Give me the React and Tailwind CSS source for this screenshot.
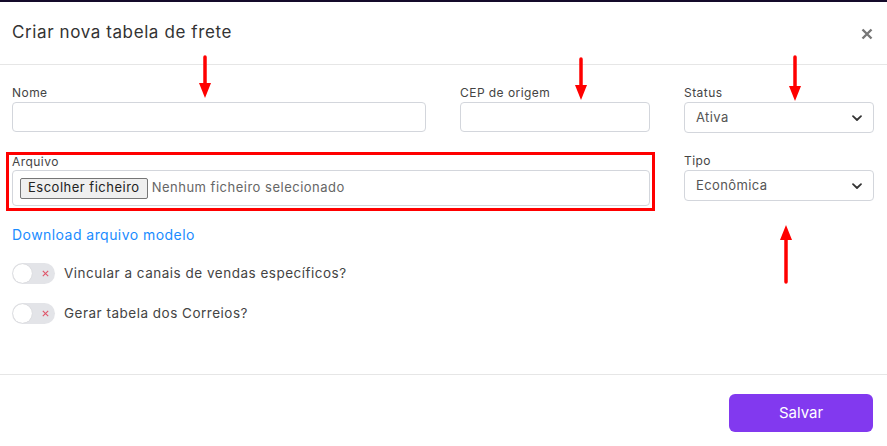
import React from 'react';

const font = { fontFamily: 'Inter, "Noto Sans", sans-serif' };

const Chevron = () => (
  <svg width="12" height="12" viewBox="0 0 12 12" className="absolute right-[10px] top-1/2 -translate-y-1/2">
    <path d="M2 4.2 L6 8 L10 4.2" fill="none" stroke="#333" strokeWidth="1.8" strokeLinecap="round" strokeLinejoin="round" />
  </svg>
);

const Select = ({ value }) => (
  <div className="relative h-[31px] rounded-[4px] border border-[#d3d6dc] bg-white flex items-center pl-[11px] text-[13px] text-[#555] tracking-[0.4px]">
    {value}
    <Chevron />
  </div>
);

const Label = ({ children }) => (
  <label className="block text-[12px] leading-[14px] text-[#444] mb-[2px] tracking-[0.45px]">{children}</label>
);

const Toggle = ({ label }) => (
  <div className="flex items-center gap-[9px]">
    <div className="relative w-[43px] h-[21px] rounded-full bg-[#e3e4e8]">
      <div className="absolute left-[1px] top-[1px] w-[19px] h-[19px] rounded-full bg-white shadow-[0_0_1px_rgba(0,0,0,0.2)]" />
      <svg width="7" height="7" viewBox="0 0 7 7" className="absolute left-[30px] top-[7px]">
        <path d="M0.8 0.8 L6.2 6.2 M6.2 0.8 L0.8 6.2" stroke="#e0556a" strokeWidth="1.1" />
      </svg>
    </div>
    <span className="text-[13.5px] text-[#444] tracking-[0.5px]">{label}</span>
  </div>
);

const Arrow = ({ x, y, h, up }) => (
  <svg
    width="16"
    height={h}
    viewBox={`0 0 16 ${h}`}
    className="absolute"
    style={{ left: x - 8, top: y }}
  >
    {up ? (
      <>
        <path d={`M8 12 L8 ${h - 2}`} stroke="#f00" strokeWidth="3.5" strokeLinecap="round" />
        <path d="M8 0 L14 15 L2 15 Z" fill="#f00" />
      </>
    ) : (
      <>
        <path d={`M8 2 L8 ${h - 12}`} stroke="#f00" strokeWidth="3.5" strokeLinecap="round" />
        <path d={`M2 ${h - 15} L14 ${h - 15} L8 ${h} Z`} fill="#f00" />
      </>
    )}
  </svg>
);

export default function App() {
  return (
    <div className="relative w-[887px] h-[446px] bg-white overflow-hidden" style={font}>
      <div className="h-[2px] bg-[#140a2a]" />

      <div className="h-[63px] border-b border-[#e6e6e6] flex items-center justify-between pl-[12px] pr-[14px]">
        <h3 className="text-[17px] text-[#333] tracking-[0.6px]">Criar nova tabela de frete</h3>
        <svg width="12" height="12" viewBox="0 0 12 12" className="mt-[2px]">
          <path d="M1.5 1.5 L10.5 10.5 M10.5 1.5 L1.5 10.5" stroke="#777" strokeWidth="2.4" />
        </svg>
      </div>

      <div className="px-[12px] pt-[21px] h-[310px] border-b border-[#e6e6e6]">
        <div className="grid grid-cols-[414px_190px_190px] gap-x-[34px]">
          <div>
            <Label>Nome</Label>
            <div className="h-[30px] rounded-[4px] border border-[#d3d6dc]" />
          </div>
          <div>
            <Label>CEP de origem</Label>
            <div className="h-[30px] rounded-[4px] border border-[#d3d6dc]" />
          </div>
          <div>
            <Label>Status</Label>
            <Select value="Ativa" />
          </div>

          <div className="col-span-2 mt-[19px] -ml-[6px] -mr-[5px] border-[3px] border-[#f00] pl-[3px] pr-[2px] pb-[2px]">
            <label className="block text-[12px] leading-[14px] text-[#444] mb-[1px] tracking-[0.45px]">Arquivo</label>
            <div className="h-[36px] rounded-[4px] border border-[#d3d6dc] flex items-center pl-[7px]">
              <span className="h-[21px] px-[7px] border border-[#767676] rounded-[2px] bg-[#efefef] text-[13px] text-[#222] flex items-center tracking-[0.5px]">
                Escolher ficheiro
              </span>
              <span className="ml-[4px] text-[13px] text-[#666] tracking-[0.5px]">Nenhum ficheiro selecionado</span>
            </div>
          </div>
          <div className="mt-[21px]">
            <Label>Tipo</Label>
            <Select value="Econômica" />
          </div>
        </div>

        <a className="block mt-[15px] text-[14px] leading-[18px] text-[#1a8cff] tracking-[0.45px]">Download arquivo modelo</a>

        <div className="mt-[19px] flex flex-col gap-[19px]">
          <Toggle label="Vincular a canais de vendas específicos?" />
          <Toggle label="Gerar tabela dos Correios?" />
        </div>
      </div>

      <div className="flex justify-end pr-[14px] pt-[19px]">
        <button className="w-[144px] h-[38px] rounded-[6px] bg-[#8239ef] text-white text-[15px]">Salvar</button>
      </div>

      <Arrow x={205} y={55} h={43} />
      <Arrow x={581} y={57} h={43} />
      <Arrow x={795} y={55} h={46} />
      <Arrow x={786} y={225} h={59} up />
    </div>
  );
}
